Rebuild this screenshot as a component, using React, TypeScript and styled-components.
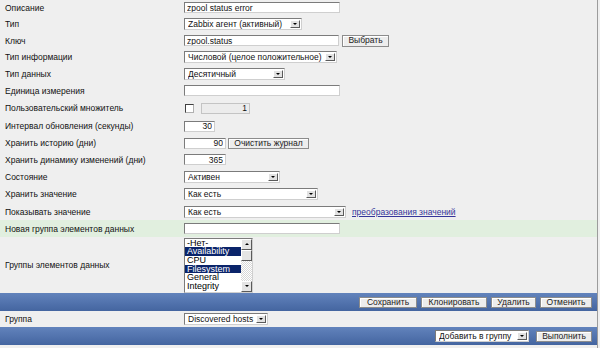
import React from "react"
import styled, { createGlobalStyle } from "styled-components"

const GlobalStyle = createGlobalStyle`
  html, body {
    margin: 0;
    padding: 0;
    background: #efefef;
  }
  body {
    font-family: "Liberation Sans", Arial, sans-serif;
    font-size: 8.5px;
    color: #111;
  }
`

const Form = styled.div`
  width: 597px;
  height: 348px;
  border-right: 1px solid #9c9c9c;
  display: flex;
  flex-direction: column;
`

const Row = styled.div<{ $h: number; $green?: boolean }>`
  display: flex;
  align-items: center;
  flex: none;
  height: ${({ $h }) => $h}px;
  background: ${({ $green }) => ($green ? "#e1efdf" : "transparent")};
`

const Label = styled.div`
  flex: none;
  width: 179px;
  padding-left: 5px;
  white-space: nowrap;
`

const Value = styled.div<{ $gap?: number }>`
  display: flex;
  align-items: center;
  gap: ${({ $gap }) => $gap ?? 3}px;
`

const TextInput = styled.input<{ $w: number; $right?: boolean }>`
  box-sizing: border-box;
  width: ${({ $w }) => $w}px;
  height: 11px;
  margin: 0;
  padding: 0 2px;
  font-family: inherit;
  font-size: 8.5px;
  color: #111;
  text-align: ${({ $right }) => ($right ? "right" : "left")};
  background: #fff;
  border: 1px solid;
  border-color: #7b7b7b #cfcfcf #cfcfcf #7b7b7b;
  outline: none;
`

const DisabledInput = styled(TextInput)`
  background: #ececec;
  border-color: #c4c4c4;
  margin-left: 4px;
`

const CheckBox = styled.span`
  box-sizing: border-box;
  display: inline-block;
  width: 9px;
  height: 9px;
  margin-left: 1px;
  background: #fff;
  border: 1px solid;
  border-color: #404040 #b0b0b0 #b0b0b0 #404040;
`

const SelectBox = styled.div<{ $w: number }>`
  box-sizing: border-box;
  width: ${({ $w }) => $w}px;
  height: 12px;
  display: flex;
  align-items: center;
  padding-left: 3px;
  background: #fff;
  border: 1px solid;
  border-color: #7b7b7b #cfcfcf #cfcfcf #7b7b7b;
`

const SelectText = styled.span`
  flex: 1;
  white-space: nowrap;
  overflow: hidden;
`

const ArrowBox = styled.span`
  box-sizing: border-box;
  flex: none;
  width: 10px;
  height: 8px;
  margin-right: 1px;
  display: flex;
  align-items: center;
  justify-content: center;
  background: #e2e2e2;
  border: 1px solid;
  border-color: #fff #5a5a5a #5a5a5a #fff;
`

const DownTriangle = styled.span`
  width: 0;
  height: 0;
  border-left: 2px solid transparent;
  border-right: 2px solid transparent;
  border-top: 2px solid #000;
`

const UpTriangle = styled(DownTriangle)`
  border-top: none;
  border-bottom: 2px solid #000;
`

const Button = styled.button<{ $w: number }>`
  box-sizing: border-box;
  width: ${({ $w }) => $w}px;
  height: 11px;
  margin: 0;
  padding: 0;
  font-family: inherit;
  font-size: 8.5px;
  line-height: 9px;
  color: #222;
  background: #ededed;
  border: 1px solid #8c8c8c;
  box-shadow: inset 1px 1px 0 #fff;
`

const Link = styled.a`
  margin-left: 3px;
  color: #35359a;
  text-decoration: underline;
`

const ListBox = styled.div`
  box-sizing: border-box;
  width: 69px;
  height: 55px;
  display: flex;
  background: #fff;
  border: 1px solid;
  border-color: #7b7b7b #cfcfcf #cfcfcf #7b7b7b;
`

const Options = styled.div`
  flex: 1;
  overflow: hidden;
`

const Option = styled.div<{ $sel?: boolean }>`
  height: 8.7px;
  line-height: 8.7px;
  padding-left: 2px;
  font-size: 9px;
  white-space: nowrap;
  background: ${({ $sel }) => ($sel ? "#0a246a" : "transparent")};
  color: ${({ $sel }) => ($sel ? "#fff" : "#000")};
`

const ScrollBar = styled.div`
  flex: none;
  width: 11px;
  display: flex;
  flex-direction: column;
`

const ScrollButton = styled.div`
  box-sizing: border-box;
  flex: none;
  height: 11px;
  display: flex;
  align-items: center;
  justify-content: center;
  background: #e4e4e4;
  border: 1px solid;
  border-color: #fff #5a5a5a #5a5a5a #fff;
`

const Thumb = styled(ScrollButton)`
  height: 11px;
`

const Track = styled.div`
  flex: 1;
  background: repeating-conic-gradient(#ffffff 0 25%, #d8d8d8 0 50%) 0 0 / 2px 2px;
`

const Bar = styled.div`
  flex: none;
  height: 18px;
  display: flex;
  align-items: center;
  justify-content: flex-end;
  gap: 4px;
  padding-right: 5px;
  background: linear-gradient(#6283bc, #4465a0);
`

const Rest = styled.div`
  flex: 1;
`

const Select = ({ width, value }: { width: number; value: string }) => (
  <SelectBox $w={width}>
    <SelectText>{value}</SelectText>
    <ArrowBox>
      <DownTriangle />
    </ArrowBox>
  </SelectBox>
)

const groups = [
  { name: "-Нет-" },
  { name: "Availability", sel: true },
  { name: "CPU" },
  { name: "Filesystem", sel: true },
  { name: "General" },
  { name: "Integrity" },
]

export default () => {
  return (
    <>
      <GlobalStyle />
      <Form>
        <Row $h={15}>
          <Label>Описание</Label>
          <Value>
            <TextInput $w={156} defaultValue="zpool status error" />
          </Value>
        </Row>
        <Row $h={17}>
          <Label>Тип</Label>
          <Value>
            <Select width={118} value="Zabbix агент (активный)" />
          </Value>
        </Row>
        <Row $h={17}>
          <Label>Ключ</Label>
          <Value>
            <TextInput $w={155} defaultValue="zpool.status" />
            <Button $w={47} style={{ height: 12 }}>
              Выбрать
            </Button>
          </Value>
        </Row>
        <Row $h={16}>
          <Label>Тип информации</Label>
          <Value>
            <Select width={153} value="Числовой (целое положительное)" />
          </Value>
        </Row>
        <Row $h={17}>
          <Label>Тип данных</Label>
          <Value>
            <Select width={101} value="Десятичный" />
          </Value>
        </Row>
        <Row $h={17}>
          <Label>Единица измерения</Label>
          <Value>
            <TextInput $w={156} defaultValue="" />
          </Value>
        </Row>
        <Row $h={18}>
          <Label>Пользовательский множитель</Label>
          <Value>
            <CheckBox />
            <DisabledInput $w={49} $right defaultValue="1" disabled />
          </Value>
        </Row>
        <Row $h={18}>
          <Label>Интервал обновления (секунды)</Label>
          <Value>
            <TextInput $w={31} $right defaultValue="30" />
          </Value>
        </Row>
        <Row $h={16}>
          <Label>Хранить историю (дни)</Label>
          <Value $gap={2}>
            <TextInput $w={42} $right defaultValue="90" />
            <Button $w={81}>Очистить журнал</Button>
          </Value>
        </Row>
        <Row $h={17}>
          <Label>Хранить динамику изменений (дни)</Label>
          <Value>
            <TextInput $w={42} $right defaultValue="365" />
          </Value>
        </Row>
        <Row $h={17}>
          <Label>Состояние</Label>
          <Value>
            <Select width={96} value="Активен" />
          </Value>
        </Row>
        <Row $h={18}>
          <Label>Хранить значение</Label>
          <Value>
            <Select width={134} value="Как есть" />
          </Value>
        </Row>
        <Row $h={17}>
          <Label>Показывать значение</Label>
          <Value>
            <Select width={162} value="Как есть" />
            <Link href="#">преобразования значений</Link>
          </Value>
        </Row>
        <Row $h={17} $green>
          <Label>Новая группа элементов данных</Label>
          <Value>
            <TextInput $w={156} defaultValue="" />
          </Value>
        </Row>
        <Row $h={56}>
          <Label>Группы элементов данных</Label>
          <Value>
            <ListBox>
              <Options>
                {groups.map((g) => (
                  <Option key={g.name} $sel={g.sel}>
                    {g.name}
                  </Option>
                ))}
              </Options>
              <ScrollBar>
                <ScrollButton>
                  <UpTriangle />
                </ScrollButton>
                <Thumb />
                <Track />
                <ScrollButton>
                  <DownTriangle />
                </ScrollButton>
              </ScrollBar>
            </ListBox>
          </Value>
        </Row>
        <Bar>
          <Button $w={58}>Сохранить</Button>
          <Button $w={66}>Клонировать</Button>
          <Button $w={45}>Удалить</Button>
          <Button $w={52}>Отменить</Button>
        </Bar>
        <Row $h={16}>
          <Label>Группа</Label>
          <Value>
            <Select width={84} value="Discovered hosts" />
          </Value>
        </Row>
        <Bar>
          <Select width={94} value="Добавить в группу" />
          <Button $w={56} style={{ marginLeft: 3 }}>
            Выполнить
          </Button>
        </Bar>
        <Rest />
      </Form>
    </>
  )
}
